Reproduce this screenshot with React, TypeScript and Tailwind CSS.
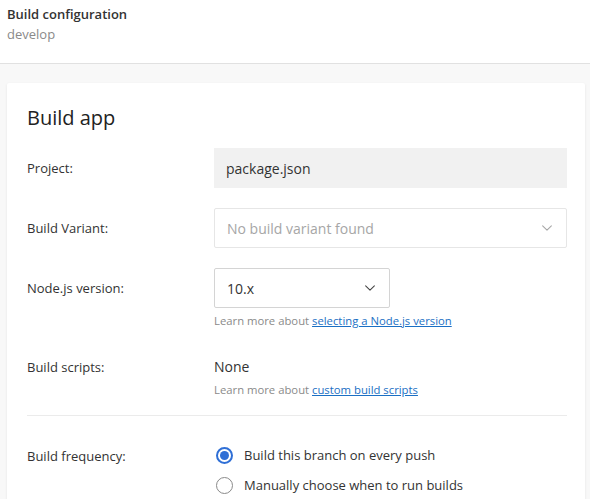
import React, { useState } from 'react';

const Chevron = ({ className }: { className?: string }) => (
  <svg width="14" height="14" viewBox="0 0 16 16" fill="none" className={className}>
    <path d="M3 5.5l5 5 5-5" stroke="currentColor" strokeWidth="1.2" strokeLinecap="round" strokeLinejoin="round" />
  </svg>
);

const Radio = ({ checked, label, onClick }: { checked: boolean; label: string; onClick: () => void }) => (
  <button type="button" onClick={onClick} className="flex items-center gap-[11px] h-[30px] pl-[2px] text-left">
    {checked ? (
      <span className="w-[17px] h-[17px] rounded-full border-[2px] border-[#2f6fd6] flex items-center justify-center">
        <span className="w-[9px] h-[9px] rounded-full bg-[#2f6fd6]" />
      </span>
    ) : (
      <span className="w-[17px] h-[17px] rounded-full border border-[#8a8a8a]" />
    )}
    <span className="text-[13px] text-[#333]">{label}</span>
  </button>
);

const Row = ({ label, children, className }: { label: string; children: React.ReactNode; className?: string }) => (
  <div className={`flex ${className ?? ''}`}>
    <div className="w-[187px] shrink-0 text-[13px] text-[#333] leading-[40px]">{label}</div>
    <div className="flex-1 min-w-0">{children}</div>
  </div>
);

const App = () => {
  const [frequency, setFrequency] = useState<'push' | 'manual'>('push');

  return (
    <div className="min-h-screen bg-[#f8f8f8] font-['Open_Sans',sans-serif] text-[#333]">
      <div className="bg-white border-b border-[#e1e1e1] h-[64px] px-[7px] pt-[4px]">
        <div className="text-[13px] font-semibold leading-[20px] text-[#333]">Build configuration</div>
        <div className="text-[13px] leading-[20px] text-[#8a8a8a]">develop</div>
      </div>

      <div className="pt-[19px] pl-[7px] pr-[5px]">
        <div className="bg-white shadow-[0_1px_3px_rgba(0,0,0,0.08)] rounded-[2px] pl-[20px] pr-[18px] pt-[20px] pb-[20px]">
          <h1 className="text-[20px] font-medium leading-[30px] text-[#222] mb-[15px]">Build app</h1>

          <div className="flex flex-col gap-[20px]">
            <Row label="Project:">
              <div className="h-[40px] bg-[#f1f1f1] px-[12px] flex items-center text-[14px] text-[#333]">
                package.json
              </div>
            </Row>

            <Row label="Build Variant:">
              <div className="h-[40px] border border-[#e6e6e6] rounded-[2px] px-[12px] flex items-center justify-between text-[14px] text-[#a6a6a6]">
                <span>No build variant found</span>
                <Chevron className="text-[#a6a6a6]" />
              </div>
            </Row>

            <Row label="Node.js version:">
              <div className="w-[176px] h-[40px] border border-[#d4d4d4] rounded-[2px] px-[12px] flex items-center justify-between text-[14px] text-[#333]">
                <span>10.x</span>
                <Chevron className="text-[#444]" />
              </div>
              <div className="mt-[5px] text-[11.3px] text-[#8a8a8a]">
                Learn more about{' '}
                <a href="#" className="text-[#1a6fc4] underline">selecting a Node.js version</a>
              </div>
            </Row>
          </div>

          <Row label="Build scripts:" className="mt-[17px]">
            <div className="text-[14px] text-[#333] leading-[40px] h-[40px]">None</div>
            <div className="-mt-[5px] text-[11.3px] text-[#8a8a8a]">
              Learn more about{' '}
              <a href="#" className="text-[#1a6fc4] underline">custom build scripts</a>
            </div>
          </Row>

          <div className="border-t border-[#ebebeb] mt-[16px] mb-[20px]" />

          <Row label="Build frequency:">
            <div className="pt-[5px] flex flex-col">
              <Radio checked={frequency === 'push'} label="Build this branch on every push" onClick={() => setFrequency('push')} />
              <Radio checked={frequency === 'manual'} label="Manually choose when to run builds" onClick={() => setFrequency('manual')} />
            </div>
          </Row>
        </div>
      </div>
    </div>
  );
};

export default App;
